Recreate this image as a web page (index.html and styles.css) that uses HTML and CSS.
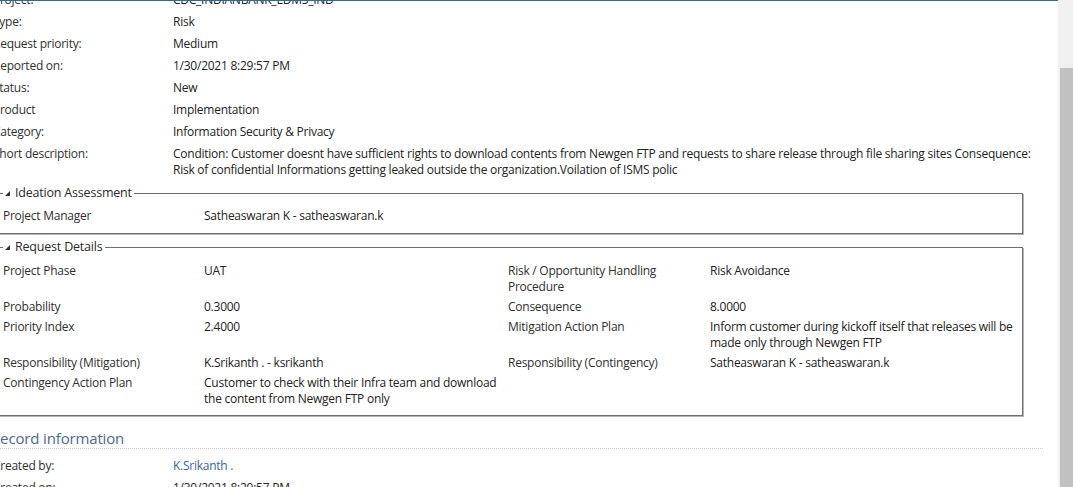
FILE: index.html
```html
<!DOCTYPE html>
<html>
<head>
<meta charset="utf-8">
<link rel="stylesheet" href="styles.css">
</head>
<body>
<div class="app">
  <div class="content">
    <div class="topline"></div>
    <div class="viewport">
      <div class="page">
        <div class="summary">
          <div class="lbl">Project:</div><div class="val">CDC_INDIANBANK_EDMS_IND</div>
          <div class="lbl">Type:</div><div class="val">Risk</div>
          <div class="lbl">Request priority:</div><div class="val">Medium</div>
          <div class="lbl">Reported on:</div><div class="val">1/30/2021 8:29:57 PM</div>
          <div class="lbl">Status:</div><div class="val">New</div>
          <div class="lbl">Product</div><div class="val">Implementation</div>
          <div class="lbl">Category:</div><div class="val">Information Security &amp; Privacy</div>
          <div class="lbl">Short description:</div><div class="val">Condition: Customer doesnt have sufficient rights to download contents from Newgen FTP and requests to share release through file sharing sites Consequence: Risk of confidential Informations getting leaked outside the organization.Voilation of ISMS polic</div>
        </div>

        <fieldset class="group group-ideation">
          <legend class="legend"><svg class="tri" width="5" height="5" viewBox="0 0 5 5"><polygon points="5,0 5,5 0,5" fill="#333"/></svg><span>Ideation Assessment</span></legend>
          <div class="grid">
            <div class="glbl">Project Manager</div><div class="gval">Satheaswaran K - satheaswaran.k</div>
          </div>
        </fieldset>

        <fieldset class="group group-request">
          <legend class="legend"><svg class="tri" width="5" height="5" viewBox="0 0 5 5"><polygon points="5,0 5,5 0,5" fill="#333"/></svg><span>Request Details</span></legend>
          <div class="grid grid4">
            <div class="glbl">Project Phase</div><div class="gval">UAT</div>
            <div class="glbl">Risk / Opportunity Handling Procedure</div><div class="gval">Risk Avoidance</div>
            <div class="glbl">Probability</div><div class="gval">0.3000</div>
            <div class="glbl">Consequence</div><div class="gval">8.0000</div>
            <div class="glbl">Priority Index</div><div class="gval">2.4000</div>
            <div class="glbl">Mitigation Action Plan</div><div class="gval">Inform customer during kickoff itself that releases will be made only through Newgen FTP</div>
            <div class="glbl">Responsibility (Mitigation)</div><div class="gval">K.Srikanth . - ksrikanth</div>
            <div class="glbl">Responsibility (Contingency)</div><div class="gval">Satheaswaran K - satheaswaran.k</div>
            <div class="glbl">Contingency Action Plan</div><div class="gval">Customer to check with their Infra team and download the content from Newgen FTP only</div>
            <div class="glbl"></div><div class="gval"></div>
          </div>
        </fieldset>

        <div class="record">
          <h2 class="record-title">Record information</h2>
          <div class="summary">
            <div class="lbl">Created by:</div><div class="val link">K.Srikanth .</div>
            <div class="lbl">Created on:</div><div class="val">1/30/2021 8:29:57 PM</div>
          </div>
        </div>
      </div>
    </div>
  </div>
  <div class="scrollbar"><div class="thumb"></div></div>
</div>
</body>
</html>
```
FILE: styles.css
```css
html, body {
  margin: 0;
  padding: 0;
  background: #fff;
  overflow: hidden;
}
body {
  font-family: "Open Sans", "Noto Sans", sans-serif;
  font-size: 12px;
  letter-spacing: -0.25px;
  color: #2f2f2f;
}
.app {
  display: flex;
  width: 1073px;
  height: 487px;
}
.content {
  flex: 1;
  display: flex;
  flex-direction: column;
  min-width: 0;
}
.topline {
  height: 1px;
  background: #2d6aa3;
  flex: none;
}
.viewport {
  flex: 1;
  overflow: hidden;
}
.page {
  margin-top: -12px;
  margin-left: -10px;
  width: 1068px;
}
.summary {
  display: grid;
  grid-template-columns: 180px 862px;
  padding-left: 3px;
}
.lbl, .val {
  padding: 3px 0;
  line-height: 16px;
}
.val { color: #222; }
.link { color: #3b64a0; }

.group {
  margin: 4px 0 0 0;
  padding: 0;
  width: 1033px;
  border: 1px solid #6f6f6f;
  box-shadow: 1px 1px 0 #b5b5b5;
  box-sizing: border-box;
}
.group-ideation { padding-bottom: 7px; }
.group-request { margin-top: 5px; padding-bottom: 6px; }
.legend {
  margin-left: 12px;
  padding: 0 2px;
  font-size: 12.5px;
  letter-spacing: -0.2px;
  color: #2a2a2a;
  line-height: 16px;
  display: flex;
  align-items: center;
}
.tri { margin-right: 5px; flex: none; }
.grid {
  display: grid;
  grid-template-columns: 201px 1fr;
  padding: 5px 0 0 12px;
}
.grid4 {
  grid-template-columns: 201px 304px 202px 1fr;
  padding-top: 6px;
}
.glbl, .gval {
  padding: 2px 0;
  line-height: 16px;
}
.glbl { padding-right: 12px; }
.gval { color: #222; padding-right: 4px; }

.record { margin-top: 12px; }
.record-title {
  margin: 0;
  margin-left: 1px;
  width: 1052px;
  font-size: 15px;
  letter-spacing: -0.15px;
  font-weight: normal;
  color: #4a6a96;
  line-height: 20px;
  border-bottom: 1px dotted #c8c8c8;
  padding-bottom: 0;
}
.record .summary { padding-top: 6px; }

.scrollbar {
  width: 15px;
  flex: none;
  background: #f0f0f0;
  display: flex;
  flex-direction: column;
  align-items: flex-end;
}
.thumb {
  margin-top: 68px;
  width: 13px;
  flex: 1;
  background: #c1c1c1;
}
```
